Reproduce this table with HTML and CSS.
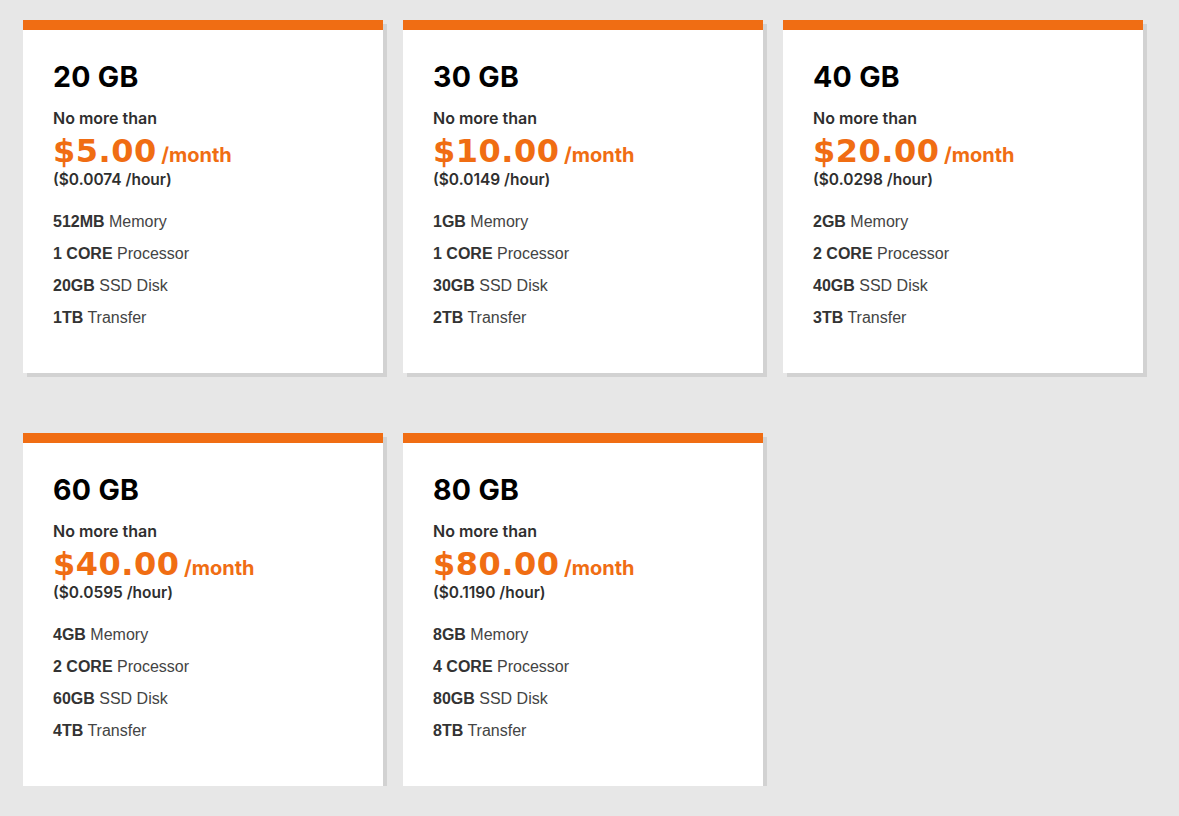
FILE: index.html
```html
<!DOCTYPE html>
<html lang="en">
<head>
<meta charset="utf-8">
<title>Plans</title>
<link rel="stylesheet" href="styles.css">
</head>
<body>
<div class="plans">
  <div class="card">
    <h2 class="size">20 GB</h2>
    <div class="lead">No more than</div>
    <div class="price"><span class="amount">$5.00</span> <span class="per">/month</span></div>
    <div class="hourly">($0.0074 /hour)</div>
    <ul class="specs">
      <li><b>512MB</b> Memory</li>
      <li><b>1 CORE</b> Processor</li>
      <li><b>20GB</b> SSD Disk</li>
      <li><b>1TB</b> Transfer</li>
    </ul>
  </div>
  <div class="card">
    <h2 class="size">30 GB</h2>
    <div class="lead">No more than</div>
    <div class="price"><span class="amount">$10.00</span> <span class="per">/month</span></div>
    <div class="hourly">($0.0149 /hour)</div>
    <ul class="specs">
      <li><b>1GB</b> Memory</li>
      <li><b>1 CORE</b> Processor</li>
      <li><b>30GB</b> SSD Disk</li>
      <li><b>2TB</b> Transfer</li>
    </ul>
  </div>
  <div class="card">
    <h2 class="size">40 GB</h2>
    <div class="lead">No more than</div>
    <div class="price"><span class="amount">$20.00</span> <span class="per">/month</span></div>
    <div class="hourly">($0.0298 /hour)</div>
    <ul class="specs">
      <li><b>2GB</b> Memory</li>
      <li><b>2 CORE</b> Processor</li>
      <li><b>40GB</b> SSD Disk</li>
      <li><b>3TB</b> Transfer</li>
    </ul>
  </div>
  <div class="card">
    <h2 class="size">60 GB</h2>
    <div class="lead">No more than</div>
    <div class="price"><span class="amount">$40.00</span> <span class="per">/month</span></div>
    <div class="hourly">($0.0595 /hour)</div>
    <ul class="specs">
      <li><b>4GB</b> Memory</li>
      <li><b>2 CORE</b> Processor</li>
      <li><b>60GB</b> SSD Disk</li>
      <li><b>4TB</b> Transfer</li>
    </ul>
  </div>
  <div class="card">
    <h2 class="size">80 GB</h2>
    <div class="lead">No more than</div>
    <div class="price"><span class="amount">$80.00</span> <span class="per">/month</span></div>
    <div class="hourly">($0.1190 /hour)</div>
    <ul class="specs">
      <li><b>8GB</b> Memory</li>
      <li><b>4 CORE</b> Processor</li>
      <li><b>80GB</b> SSD Disk</li>
      <li><b>8TB</b> Transfer</li>
    </ul>
  </div>
</div>
</body>
</html>
```

FILE: styles.css
```css
html, body {
  margin: 0;
  padding: 0;
  background: #e7e7e7;
}
body {
  padding: 20px 0 0 23px;
  font-family: "Liberation Sans", Arial, sans-serif;
}
.plans {
  display: grid;
  grid-template-columns: repeat(3, 360px);
  column-gap: 20px;
  row-gap: 60px;
}
.card {
  background: #fff;
  border-top: 10px solid #f06d13;
  box-shadow: 4px 4px 0 #d2d2d2;
  padding: 30px 30px 39px;
  height: 353px;
  box-sizing: border-box;
}
.size {
  margin: 0;
  font-family: "Inter", sans-serif;
  font-weight: 700;
  font-size: 28.5px;
  letter-spacing: 0.3px;
  line-height: 34px;
  color: #000;
}
.lead {
  margin-top: 14px;
  font-family: "Inter", sans-serif;
  font-weight: 600;
  font-size: 16px;
  line-height: 20px;
  color: #2f2f2f;
}
.price {
  margin-top: 7px;
  height: 34px;
  line-height: 34px;
  color: #f06d13;
  white-space: nowrap;
}
.amount {
  font-family: "DejaVu Sans", sans-serif;
  font-weight: 700;
  font-size: 32px;
  letter-spacing: 0.5px;
  line-height: 1;
}
.per {
  font-family: "Inter", sans-serif;
  font-weight: 700;
  font-size: 20px;
  line-height: 1;
}
.hourly {
  margin-top: 1px;
  font-family: "Inter", sans-serif;
  font-weight: 600;
  font-size: 15.5px;
  line-height: 20px;
  color: #2f2f2f;
}
.specs {
  list-style: none;
  margin: 16px 0 0;
  padding: 0;
  font-size: 16px;
  line-height: 32px;
  color: #444;
}
.specs b {
  color: #333;
}
```
